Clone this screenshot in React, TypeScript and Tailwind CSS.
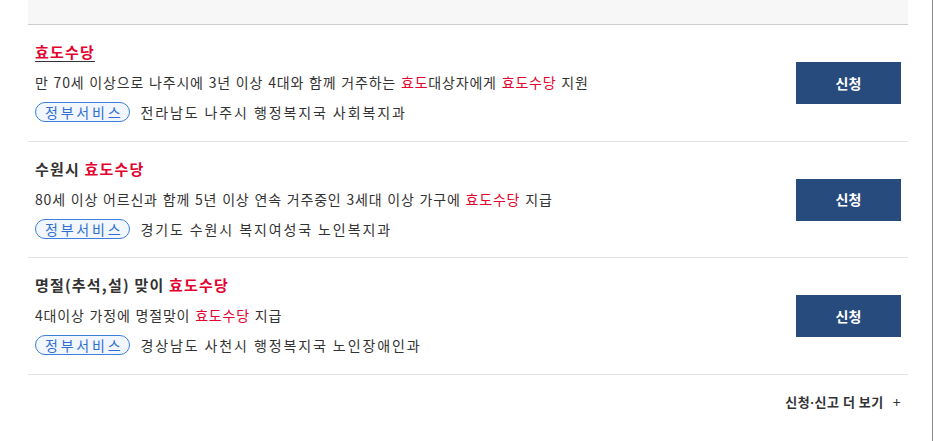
import React from "react";

const R = ({ children }: { children: React.ReactNode }) => (
  <span className="text-[#e5002d]">{children}</span>
);

type Item = {
  title: React.ReactNode;
  desc: React.ReactNode;
  org: string;
  h: string;
};

const items: Item[] = [
  {
    title: <span className="text-[#e5002d] underline underline-offset-[3px] decoration-[#333]">효도수당</span>,
    desc: (
      <>
        만 70세 이상으로 나주시에 3년 이상 4대와 함께 거주하는 <R>효도</R>대상자에게 <R>효도수당</R> 지원
      </>
    ),
    org: "전라남도 나주시 행정복지국 사회복지과",
    h: "h-[117px]",
  },
  {
    title: (
      <>
        수원시 <R>효도수당</R>
      </>
    ),
    desc: (
      <>
        80세 이상 어르신과 함께 5년 이상 연속 거주중인 3세대 이상 가구에 <R>효도수당</R> 지급
      </>
    ),
    org: "경기도 수원시 복지여성국 노인복지과",
    h: "h-[116px]",
  },
  {
    title: (
      <>
        명절(추석,설) 맞이 <R>효도수당</R>
      </>
    ),
    desc: (
      <>
        4대이상 가정에 명절맞이 <R>효도수당</R> 지급
      </>
    ),
    org: "경상남도 사천시 행정복지국 노인장애인과",
    h: "h-[117px]",
  },
];

export default function App() {
  return (
    <div
      className="relative w-[933px] h-[441px] bg-white overflow-hidden text-[#333]"
      style={{ fontFamily: '"Noto Sans CJK KR", "Noto Sans", sans-serif' }}
    >
      <div className="absolute top-0 right-[0px] w-[1px] h-full bg-[#8a8a8a]" />
      <div className="ml-[28px] w-[880px]">
        <div className="h-[25px] bg-[#f7f7f7] border-b border-[#cccccc]" />
        {items.map((it, i) => (
          <div
            key={i}
            className={`flex items-center ${it.h} border-b border-[#e2e2e2] pl-[7px] pr-[7px]`}
          >
            <div className="flex-1 flex flex-col pb-[2px]">
              <div className="text-[15px] font-bold leading-[20px] tracking-[1.2px]">{it.title}</div>
              <div className="mt-[10px] text-[14px] leading-[20px] tracking-[0.8px] [word-spacing:1px]">{it.desc}</div>
              <div className="mt-[10px] flex items-center">
                <span className="h-[20px] pl-[9px] pr-[6px] flex items-center rounded-full border border-[#3d80dc] bg-[#f1f6ff] text-[#2f6fd0] text-[14px] leading-[18px] tracking-[2.8px]">
                  정부서비스
                </span>
                <span className="ml-[10px] text-[14px] leading-[20px] tracking-[1.9px]">{it.org}</span>
              </div>
            </div>
            <button className="w-[105px] h-[42px] bg-[#284b7d] text-white text-[14px] font-bold flex items-center justify-center">
              신청
            </button>
          </div>
        ))}
        <div className="flex justify-end items-center h-[54px] pr-[7px] text-[13px] font-bold tracking-[0.5px] text-[#333]">
          <span>
            신청<span className="font-['Liberation_Sans'] tracking-[0px]">·</span>신고 더 보기
          </span>
          <span className="ml-[9px] font-normal text-[14px]">+</span>
        </div>
      </div>
    </div>
  );
}
